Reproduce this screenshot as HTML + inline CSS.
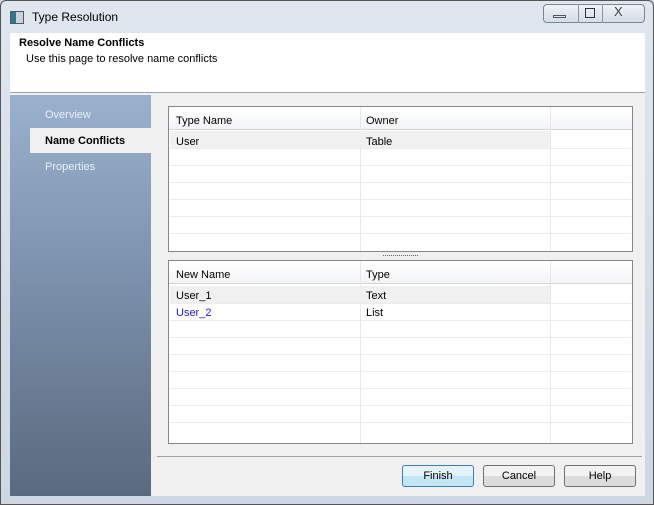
<!DOCTYPE html>
<html><head><style>
*{margin:0;padding:0;box-sizing:border-box}
body{width:654px;height:505px;overflow:hidden;background:#cfd8e2;font-family:"Liberation Sans",sans-serif;font-size:11px;color:#000;position:relative}
.a{position:absolute}
.frame{left:0;top:0;width:654px;height:505px;background:linear-gradient(#dfe6ee,#cdd7e2);border:1px solid #555;border-radius:6px 6px 0 0}
.tbl{background:#fff;border:1px solid #828790}
.hd{position:absolute;left:0;right:0;top:1px;height:22px;background:linear-gradient(#fff,#f3f4f6);border-bottom:1px solid #d5d5d5}
.cell{position:absolute;top:6px}
.vl{position:absolute;width:1px;background:#e8e8e8;top:0;bottom:0}
.hl{position:absolute;left:1px;right:1px;height:1px;background:#ececec}
.btn{position:absolute;top:465px;width:72px;height:22px;border:1px solid #707070;border-radius:3px;background:linear-gradient(#f2f2f2 50%,#dcdcdc 50%);text-align:center;line-height:20px;font-size:11px}
</style></head><body>
<div class="a frame"></div>
<div class="a" style="left:10px;top:11px;width:14px;height:13px;background:linear-gradient(90deg,#2a7a8c 40%,#c9d3df 40%);border:1px solid #556"></div>
<div class="a" style="left:32px;top:10px;font-size:12px;">Type Resolution</div>
<div class="a" style="left:543px;top:4px;width:102px;height:19px;border:1px solid #7a8595;border-radius:4px;background:linear-gradient(#eef2f6,#d5dde6)"></div>
<div class="a" style="left:578px;top:4px;width:1px;height:19px;background:#8a95a5"></div>
<div class="a" style="left:602px;top:4px;width:1px;height:19px;background:#8a95a5"></div>
<div class="a" style="left:553px;top:15px;width:13px;height:3px;border:1px solid #555"></div>
<div class="a" style="left:585px;top:8px;width:10px;height:10px;border:1px solid #333"></div>
<div class="a" style="left:614px;top:4px;font-size:13px;color:#444">X</div>
<div class="a" style="left:10px;top:33px;width:635px;height:463px;background:#f0f0f0"></div>
<div class="a" style="left:10px;top:33px;width:635px;height:60px;background:#fff;border-bottom:1px solid #a0a0a0"></div>
<div class="a" style="left:19px;top:37px;font-weight:bold">Resolve Name Conflicts</div>
<div class="a" style="left:26px;top:53px">Use this page to resolve name conflicts</div>
<div class="a" style="left:10px;top:95px;width:141px;height:401px;background:linear-gradient(#9ab1ce,#7f94b0 40%,#5a6a7e)"></div>
<div class="a" style="left:45px;top:109px;color:#e8eef5">Overview</div>
<div class="a" style="left:30px;top:128px;width:121px;height:25px;background:#f0f0f0"></div>
<div class="a" style="left:45px;top:135px;font-weight:bold">Name Conflicts</div>
<div class="a" style="left:45px;top:161px;color:#e8eef5">Properties</div>

<div class="a tbl" style="left:168px;top:106px;width:465px;height:146px">
<div class="hd"></div>
<div class="vl" style="left:191px"></div><div class="vl" style="left:381px"></div>
<div class="a" style="left:1px;top:24px;width:380px;height:17px;background:#f0f0f0"></div>
<div class="hl" style="top:41px"></div><div class="hl" style="top:58px"></div><div class="hl" style="top:75px"></div><div class="hl" style="top:92px"></div><div class="hl" style="top:109px"></div><div class="hl" style="top:126px"></div>
<div class="cell" style="left:7px;top:8px">Type Name</div><div class="cell" style="left:197px;top:8px">Owner</div>
<div class="cell" style="left:7px;top:29px">User</div><div class="cell" style="left:197px;top:29px">Table</div>
</div>
<div class="a" style="left:383px;top:255px;width:35px;height:1px;border-top:1px dotted #666"></div>
<div class="a tbl" style="left:168px;top:260px;width:465px;height:184px">
<div class="hd"></div>
<div class="vl" style="left:191px"></div><div class="vl" style="left:381px"></div>
<div class="a" style="left:1px;top:25px;width:380px;height:17px;background:#f0f0f0"></div>
<div class="hl" style="top:42px"></div><div class="hl" style="top:59px"></div><div class="hl" style="top:76px"></div><div class="hl" style="top:93px"></div><div class="hl" style="top:110px"></div><div class="hl" style="top:127px"></div><div class="hl" style="top:144px"></div><div class="hl" style="top:161px"></div>
<div class="cell" style="left:7px;top:8px">New Name</div><div class="cell" style="left:197px;top:8px">Type</div>
<div class="cell" style="left:7px;top:29px">User_1</div><div class="cell" style="left:197px;top:29px">Text</div>
<div class="cell" style="left:7px;top:46px;color:#1a1ae0">User_2</div><div class="cell" style="left:197px;top:46px">List</div>
</div>
<div class="a" style="left:157px;top:456px;width:485px;height:1px;background:#a0a0a0"></div>
<div class="btn" style="left:402px;border-color:#3c7fb1;background:linear-gradient(#e5f4fc 50%,#c4e5f6 50%)">Finish</div>
<div class="btn" style="left:483px">Cancel</div>
<div class="btn" style="left:564px">Help</div>
</body></html>
